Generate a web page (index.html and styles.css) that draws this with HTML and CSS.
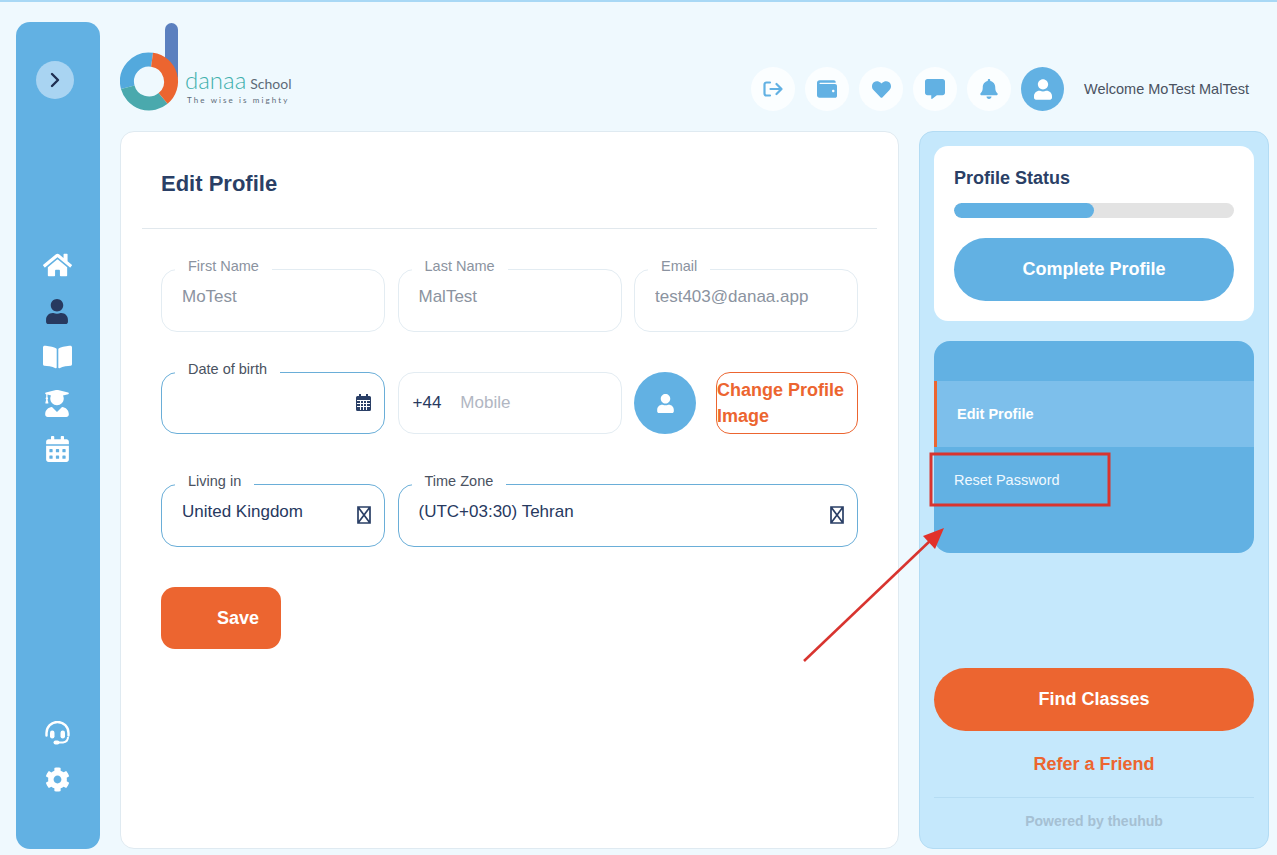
FILE: index.html
```html
<!DOCTYPE html>
<html lang="en">
<head>
    <meta charset="UTF-8">
    <meta name="viewport" content="width=device-width, initial-scale=1.0">
    <title>Edit Profile - danaa School</title>
    <link rel="stylesheet" href="styles.css">
</head>
<body>
    <div class="shell">
        <!-- left rail -->
        <aside class="sidebar">
            <button class="toggle" aria-label="Expand menu">
                <svg width="10" height="16" viewBox="0 0 10 16"><path d="M2 2l6 6-6 6" fill="none" stroke="#1f2f52" stroke-width="2.4" stroke-linecap="round" stroke-linejoin="round"/></svg>
            </button>
            <nav class="rail-nav">
                <a class="rail-item"><svg width="29" height="26" viewBox="0 0 576 512"><path fill="#fff" d="M280.37 148.26L96 300.11V464a16 16 0 0 0 16 16l112.06-.29a16 16 0 0 0 15.92-16V368a16 16 0 0 1 16-16h64a16 16 0 0 1 16 16v95.64a16 16 0 0 0 16 16.05L464 480a16 16 0 0 0 16-16V300L295.67 148.26a12.19 12.19 0 0 0-15.3 0zM571.6 251.47L488 182.56V44.05a12 12 0 0 0-12-12h-56a12 12 0 0 0-12 12v72.61L318.47 43a48 48 0 0 0-61 0L4.34 251.47a12 12 0 0 0-1.6 16.9l25.5 31A12 12 0 0 0 45.15 301l235.22-193.74a12.19 12.19 0 0 1 15.3 0L530.9 301a12 12 0 0 0 16.9-1.6l25.5-31a12 12 0 0 0-1.7-16.93z"/></svg></a>
                <a class="rail-item"><svg width="22" height="25" viewBox="0 0 448 512"><path fill="#27395f" d="M224 256c70.7 0 128-57.3 128-128S294.7 0 224 0 96 57.3 96 128s57.3 128 128 128zm89.6 32h-16.7c-22.2 10.2-46.9 16-72.9 16s-50.6-5.8-72.9-16h-16.7C60.2 288 0 348.2 0 422.4V464c0 26.5 21.5 48 48 48h352c26.5 0 48-21.5 48-48v-41.6c0-74.2-60.2-134.4-134.4-134.4z"/></svg></a>
                <a class="rail-item"><svg width="29" height="26" viewBox="0 0 576 512"><path fill="#fff" d="M542.22 32.05c-54.8 3.11-163.72 14.43-230.96 55.59-4.64 2.84-7.27 7.89-7.27 13.17v363.87c0 11.55 12.63 18.85 23.28 13.49 69.18-34.82 169.23-44.32 218.7-46.92 16.89-.89 30.02-14.43 30.02-30.66V62.75c.01-17.71-15.35-31.74-33.77-30.7zM264.73 87.64C197.5 46.48 88.58 35.17 33.78 32.05 15.36 31.01 0 45.04 0 62.75V400.6c0 16.24 13.13 29.78 30.02 30.66 49.49 2.6 149.59 12.11 218.77 46.95 10.62 5.35 23.21-1.94 23.21-13.46V100.63c0-5.29-2.62-10.14-7.27-12.99z"/></svg></a>
                <a class="rail-item"><svg width="24" height="27" viewBox="0 0 448 512"><path fill="#fff" d="M319.4 320.6L224 416l-95.4-95.4C57.1 323.7 0 382.2 0 454.4v9.6c0 26.5 21.5 48 48 48h352c26.5 0 48-21.5 48-48v-9.6c0-72.2-57.1-130.7-128.6-133.8zM13.6 79.8l6.4 1.5v58.4c-7 4.2-12 11.5-12 20.3 0 8.4 4.6 15.4 11.1 19.7L3.5 242c-1.7 6.9 2.1 14 7.6 14h41.8c5.5 0 9.3-7.1 7.6-14l-15.6-62.3C51.4 175.4 56 168.4 56 160c0-8.8-5-16.1-12-20.3V87.1l66 15.9c-8.6 17.2-14 36.4-14 57 0 70.7 57.3 128 128 128s128-57.3 128-128c0-20.6-5.3-39.8-14-57l96.3-23.2c18.2-4.4 18.2-27.1 0-31.5l-190.4-46c-13-3.1-26.7-3.1-39.7 0L13.6 48.2c-18.1 4.4-18.1 27.2 0 31.6z"/></svg></a>
                <a class="rail-item"><svg width="23" height="26" viewBox="0 0 448 512"><path fill="#fff" d="M0 464c0 26.5 21.5 48 48 48h352c26.5 0 48-21.5 48-48V192H0v272zm320-196c0-6.6 5.4-12 12-12h40c6.6 0 12 5.4 12 12v40c0 6.6-5.4 12-12 12h-40c-6.6 0-12-5.4-12-12v-40zm0 128c0-6.6 5.4-12 12-12h40c6.6 0 12 5.4 12 12v40c0 6.6-5.4 12-12 12h-40c-6.6 0-12-5.4-12-12v-40zM192 268c0-6.6 5.4-12 12-12h40c6.6 0 12 5.4 12 12v40c0 6.6-5.4 12-12 12h-40c-6.6 0-12-5.4-12-12v-40zm0 128c0-6.6 5.4-12 12-12h40c6.6 0 12 5.4 12 12v40c0 6.6-5.4 12-12 12h-40c-6.6 0-12-5.4-12-12v-40zM64 268c0-6.6 5.4-12 12-12h40c6.6 0 12 5.4 12 12v40c0 6.6-5.4 12-12 12H76c-6.6 0-12-5.4-12-12v-40zm0 128c0-6.6 5.4-12 12-12h40c6.6 0 12 5.4 12 12v40c0 6.6-5.4 12-12 12H76c-6.6 0-12-5.4-12-12v-40zM400 64h-48V16c0-8.8-7.2-16-16-16h-32c-8.8 0-16 7.2-16 16v48H160V16c0-8.8-7.2-16-16-16h-32c-8.8 0-16 7.2-16 16v48H48C21.5 64 0 85.5 0 112v48h448v-48c0-26.5-21.5-48-48-48z"/></svg></a>
            </nav>
            <div class="rail-tools">
                <a class="rail-item">
                    <svg width="27" height="25" viewBox="0 0 27 25">
                        <path d="M2.5 14.5V12a11 11 0 0 1 22 0v2.5" fill="none" stroke="#fff" stroke-width="2.4" stroke-linecap="round"/>
                        <rect x="6" y="9.5" width="4.5" height="8" rx="2.2" fill="#fff"/>
                        <rect x="16.5" y="9.5" width="4.5" height="8" rx="2.2" fill="#fff"/>
                        <path d="M24 16c0 3-2 5-5 5.5h-5" fill="none" stroke="#fff" stroke-width="2"/>
                        <rect x="9.5" y="19.5" width="6" height="4" rx="2" fill="#fff"/>
                    </svg>
                </a>
                <a class="rail-item"><svg width="25" height="25" viewBox="0 0 512 512"><path fill="#fff" d="M487.4 315.7l-42.6-24.6c4.3-23.2 4.3-47 0-70.2l42.6-24.6c4.9-2.8 7.1-8.6 5.5-14-11.1-35.6-30-67.8-54.7-94.6-3.8-4.1-10-5.1-14.8-2.3L380.8 110c-17.9-15.4-38.5-27.3-60.8-35.1V25.8c0-5.6-3.9-10.5-9.4-11.7-36.7-8.2-74.3-7.8-109.2 0-5.5 1.2-9.4 6.1-9.4 11.7V75c-22.2 7.9-42.8 19.8-60.8 35.1L88.7 85.5c-4.9-2.8-11-1.9-14.8 2.3-24.7 26.7-43.6 58.9-54.7 94.6-1.7 5.4.6 11.2 5.5 14L67.3 221c-4.3 23.2-4.3 47 0 70.2l-42.6 24.6c-4.9 2.8-7.1 8.6-5.5 14 11.1 35.6 30 67.8 54.7 94.6 3.8 4.1 10 5.1 14.8 2.3l42.6-24.6c17.9 15.4 38.5 27.3 60.8 35.1v49.2c0 5.6 3.9 10.5 9.4 11.7 36.7 8.2 74.3 7.8 109.2 0 5.5-1.2 9.4-6.1 9.4-11.7v-49.2c22.2-7.9 42.8-19.8 60.8-35.1l42.6 24.6c4.9 2.8 11 1.9 14.8-2.3 24.7-26.7 43.6-58.9 54.7-94.6 1.5-5.5-.7-11.3-5.6-14.1zM256 336c-44.1 0-80-35.9-80-80s35.9-80 80-80 80 35.9 80 80-35.9 80-80 80z"/></svg></a>
            </div>
        </aside>

        <div class="content">
            <!-- top bar -->
            <header class="topbar">
                <div class="logo">
                    <svg width="60" height="90" viewBox="0 0 60 90">
                        <rect x="45" y="1" width="13" height="60" rx="6.5" fill="#5b80bf"/>
                        <g fill="none" stroke-width="14">
                            <path d="M7.75 65.2A22 22 0 0 1 32.06 37.7" stroke="#53a9dd"/>
                            <path d="M43.1 76.4A22 22 0 0 1 7.75 65.2" stroke="#4aa9ad"/>
                            <path d="M32.06 37.7A22 22 0 0 1 43.1 76.4" stroke="#ec6530"/>
                        </g>
                    </svg>
                    <div class="logo-text">
                        <div class="logo-name"><span class="logo-danaa">danaa</span> <span class="logo-school">School</span></div>
                        <div class="logo-tag">The wise is mighty</div>
                    </div>
                </div>
                <div class="actions">
                    <a class="circle-btn"><svg width="20" height="16" viewBox="0 0 20 16"><path d="M7 1.5H3.5a2 2 0 0 0-2 2v9a2 2 0 0 0 2 2H7M7.5 8h11M13.5 3l5 5-5 5" fill="none" stroke="#62b1e3" stroke-width="2.2" stroke-linecap="round" stroke-linejoin="round"/></svg></a>
                    <a class="circle-btn"><svg width="20" height="20" viewBox="0 0 512 512"><path fill="#62b1e3" d="M461.2 128H80c-8.84 0-16-7.16-16-16s7.16-16 16-16h384c8.84 0 16-7.16 16-16 0-26.51-21.49-48-48-48H64C28.65 32 0 60.65 0 96v320c0 35.35 28.65 64 64 64h397.2c28.02 0 50.8-21.53 50.8-48V176c0-26.47-22.78-48-50.8-48zM416 336c-17.67 0-32-14.33-32-32s14.33-32 32-32 32 14.33 32 32-14.33 32-32 32z"/></svg></a>
                    <a class="circle-btn"><svg width="19" height="19" viewBox="0 0 512 512"><path fill="#62b1e3" d="M462.3 62.6C407.5 15.9 326 24.3 275.7 76.2L256 96.5l-19.7-20.3C186.1 24.3 104.5 15.9 49.7 62.6c-62.8 53.6-66.1 149.8-9.9 207.9l193.5 199.8c12.5 12.9 32.8 12.9 45.3 0l193.5-199.8c56.3-58.1 53-154.3-9.8-207.9z"/></svg></a>
                    <a class="circle-btn"><svg width="20" height="20" viewBox="0 0 512 512"><path fill="#62b1e3" d="M448 0H64C28.7 0 0 28.7 0 64v288c0 35.3 28.7 64 64 64h96v84c0 9.8 11.2 15.5 19.1 9.7L304 416h144c35.3 0 64-28.7 64-64V64c0-35.3-28.7-64-64-64z"/></svg></a>
                    <a class="circle-btn"><svg width="18" height="20" viewBox="0 0 448 512"><path fill="#62b1e3" d="M224 512c35.32 0 63.97-28.65 63.97-64H160.03c0 35.35 28.65 64 63.97 64zm215.39-149.71c-19.32-20.76-55.47-51.99-55.47-154.29 0-77.7-54.48-139.9-127.94-155.16V32c0-17.67-14.32-32-31.98-32s-31.98 14.33-31.98 32v20.84C118.56 68.1 64.08 130.3 64.08 208c0 102.3-36.15 133.53-55.47 154.29-6 6.45-8.66 14.16-8.61 21.71.11 16.4 12.98 32 32.1 32h383.8c19.12 0 32-15.6 32.1-32 .05-7.55-2.61-15.27-8.61-21.71z"/></svg></a>
                    <a class="avatar"><svg width="18" height="21" viewBox="0 0 448 512"><path fill="#fff" d="M224 256c70.7 0 128-57.3 128-128S294.7 0 224 0 96 57.3 96 128s57.3 128 128 128zm89.6 32h-16.7c-22.2 10.2-46.9 16-72.9 16s-50.6-5.8-72.9-16h-16.7C60.2 288 0 348.2 0 422.4V464c0 26.5 21.5 48 48 48h352c26.5 0 48-21.5 48-48v-41.6c0-74.2-60.2-134.4-134.4-134.4z"/></svg></a>
                    <span class="welcome">Welcome MoTest MalTest</span>
                </div>
            </header>

            <div class="columns">
                <!-- form card -->
                <main class="card">
                    <h1 class="card-title">Edit Profile</h1>
                    <form class="form">
                        <fieldset class="field">
                            <legend>First Name</legend>
                            <input type="text" value="MoTest" disabled>
                        </fieldset>
                        <fieldset class="field">
                            <legend>Last Name</legend>
                            <input type="text" value="MalTest" disabled>
                        </fieldset>
                        <fieldset class="field">
                            <legend>Email</legend>
                            <input type="text" value="test403@danaa.app" disabled>
                        </fieldset>

                        <fieldset class="field active row-two">
                            <legend>Date of birth</legend>
                            <input type="text" class="mid">
                            <svg class="date-icon" width="15" height="17" viewBox="0 0 15 17">
                                <path fill="#2a3f66" d="M3 0h2v2h5V0h2v2h1.5A1.5 1.5 0 0 1 15 3.5v12a1.5 1.5 0 0 1-1.5 1.5h-12A1.5 1.5 0 0 1 0 15.500v-12A1.500 1.500 0 0 1 1.500 2H3z"/>
                                <path fill="none" stroke="#fff" d="M1 6.500h13M1 9.500h13M1 12.500h13M4.500 6v10M7.500 6v10M10.500 6v10"/>
                            </svg>
                        </fieldset>
                        <fieldset class="field row-two">
                            <legend class="no-label"></legend>
                            <div class="phone">
                                <span class="dial">+44</span>
                                <input type="text" class="mid" placeholder="Mobile">
                            </div>
                        </fieldset>
                        <div class="photo row-two">
                            <div class="photo-circle"><svg width="17" height="19" viewBox="0 0 448 512"><path fill="#fff" d="M224 256c70.7 0 128-57.3 128-128S294.7 0 224 0 96 57.3 96 128s57.3 128 128 128zm89.6 32h-16.7c-22.2 10.2-46.9 16-72.9 16s-50.6-5.8-72.9-16h-16.7C60.2 288 0 348.2 0 422.4V464c0 26.5 21.5 48 48 48h352c26.5 0 48-21.5 48-48v-41.6c0-74.2-60.2-134.4-134.4-134.4z"/></svg></div>
                            <button type="button" class="photo-btn">Change Profile Image</button>
                        </div>

                        <fieldset class="field active row-three">
                            <legend>Living in</legend>
                            <input type="text" value="United Kingdom">
                            <svg class="missing-glyph" width="14" height="18" viewBox="0 0 14 18"><path d="M1 1h12v16H1zM1 1l12 16M13 1L1 17" fill="none" stroke="#2a3f66" stroke-width="1.700"/></svg>
                        </fieldset>
                        <fieldset class="field active row-three span-two">
                            <legend>Time Zone</legend>
                            <input type="text" value="(UTC+03:30) Tehran">
                            <svg class="missing-glyph" width="14" height="18" viewBox="0 0 14 18"><path d="M1 1h12v16H1zM1 1l12 16M13 1L1 17" fill="none" stroke="#2a3f66" stroke-width="1.700"/></svg>
                        </fieldset>
                    </form>
                    <button type="button" class="save">Save</button>
                </main>

                <!-- right panel -->
                <aside class="panel">
                    <section class="status">
                        <h2 class="status-title">Profile Status</h2>
                        <div class="progress"><div class="progress-fill" style="width: 50%"></div></div>
                        <button class="pill pill-blue">Complete Profile</button>
                    </section>
                    <nav class="side-menu">
                        <a class="side-link current">Edit Profile</a>
                        <a class="side-link">Reset Password</a>
                    </nav>
                    <div class="panel-foot">
                        <button class="pill pill-orange">Find Classes</button>
                        <a class="refer">Refer a Friend</a>
                        <div class="powered">Powered by theuhub</div>
                    </div>
                </aside>
            </div>
        </div>
    </div>

    <!-- red markup drawn over the screenshot -->
    <svg class="markup" width="1277" height="855" viewBox="0 0 1277 855">
        <rect x="931" y="454" width="178" height="51" fill="none" stroke="#d8342f" stroke-width="3"/>
        <path d="M804 661L932 539" stroke="#d8342f" stroke-width="2.500" fill="none"/>
        <path d="M944 528L935 549L923 536z" fill="#e2312a"/>
    </svg>
</body>
</html>
```

FILE: styles.css
```css
* {
    box-sizing: border-box;
}

body {
    margin: 0;
    height: 855px;
    overflow: hidden;
    background-color: #eff9fe;
    border-top: 2px solid #a8d8f5;
    font-family: "Liberation Sans", Arial, sans-serif;
    color: #27395f;
}

a {
    color: inherit;
    text-decoration: none;
}

button {
    font-family: inherit;
    border: none;
    cursor: pointer;
}

.shell {
    display: flex;
    gap: 20px;
    height: 853px;
    padding: 20px 8px 6px 16px;
}

/* left rail */
.sidebar {
    width: 84px;
    flex-shrink: 0;
    display: flex;
    flex-direction: column;
    align-items: center;
    background-color: #62b1e3;
    border-radius: 14px;
    padding-top: 39px;
    padding-bottom: 47px;
}

.toggle {
    width: 38px;
    height: 38px;
    margin-right: 6px;
    border-radius: 50%;
    background-color: #a9d4f2;
    display: flex;
    align-items: center;
    justify-content: center;
    padding: 0;
}

.rail-nav {
    margin-top: 143px;
    display: flex;
    flex-direction: column;
}

.rail-tools {
    margin-top: auto;
    display: flex;
    flex-direction: column;
}

.rail-item {
    height: 46px;
    display: flex;
    align-items: center;
    justify-content: center;
    margin-right: 2px;
}

/* top bar */
.content {
    flex: 1;
    min-width: 0;
    display: flex;
    flex-direction: column;
}

.topbar {
    height: 109px;
    display: flex;
    justify-content: space-between;
    padding-right: 20px;
}

.logo {
    display: flex;
    gap: 5px;
    height: 90px;
}

.logo-text {
    align-self: flex-end;
    padding-bottom: 7px;
    width: 112px;
}

.logo-name {
    display: flex;
    align-items: baseline;
    gap: 4px;
    line-height: 20px;
}

.logo-danaa {
    font-family: Lato, sans-serif;
    font-weight: 300;
    font-size: 24px;
    color: #3fb0ad;
}

.logo-school {
    font-family: Lato, sans-serif;
    font-size: 14px;
    color: #5d6b78;
}

.logo-tag {
    font-family: Lato, sans-serif;
    font-size: 8px;
    letter-spacing: 2.1px;
    line-height: 10px;
    margin-top: 1px;
    margin-left: 2px;
    color: #5d6b78;
    white-space: nowrap;
}

.actions {
    display: flex;
    align-items: center;
    gap: 10px;
    height: 44px;
    margin-top: 45px;
}

.circle-btn {
    width: 44px;
    height: 44px;
    border-radius: 50%;
    background-color: #fbfeff;
    display: flex;
    align-items: center;
    justify-content: center;
}

.avatar {
    width: 43px;
    height: 44px;
    border-radius: 50%;
    background-color: #62b1e3;
    display: flex;
    align-items: center;
    justify-content: center;
}

.welcome {
    margin-left: 10px;
    font-size: 14.5px;
    color: #4a5261;
}

.columns {
    flex: 1;
    min-height: 0;
    display: grid;
    grid-template-columns: 779px 350px;
    gap: 20px;
}

/* form card */
.card {
    background-color: #fff;
    border: 1px solid #dfeaf1;
    border-radius: 14px;
    padding: 0 21px;
}

.card-title {
    margin: 0;
    padding: 39px 19px 31px;
    font-size: 22px;
    line-height: 26px;
    color: #2a3f66;
    border-bottom: 1px solid #e1e8ed;
}

.form {
    margin-top: 29px;
    padding: 0 19px;
    display: grid;
    grid-template-columns: repeat(3, 1fr);
    column-gap: 12.5px;
    align-items: end;
}

.field {
    position: relative;
    min-width: 0;
    margin: 0;
    padding: 0;
    height: 74px;
    border: 1px solid #e3ecf2;
    border-radius: 16px;
    background-color: #fff;
    display: flex;
}

.field.active {
    border-color: #6aaed8;
}

.field legend {
    margin-left: 13px;
    padding: 0 13px 6px;
    font-size: 14.5px;
    line-height: 16px;
    color: #8b93a0;
}

.field.active legend {
    color: #4a5261;
}

.field legend.no-label {
    padding: 0;
    height: 22px;
    width: 0;
}

.field input {
    flex: 1;
    width: 100%;
    min-width: 0;
    height: 34px;
    border: none;
    outline: none;
    background: transparent;
    padding: 0 0 0 20px;
    font-family: inherit;
    font-size: 17px;
    color: #27395f;
}

.field input:disabled {
    color: #8b93a0;
}

.field input.mid {
    height: 40px;
    font-size: 17px;
}

.field input::placeholder {
    color: #b1b6c2;
}

.row-two {
    margin-top: 29px;
    height: 73px;
}

.row-three {
    margin-top: 39px;
}

.span-two {
    grid-column: span 2;
}

.date-icon {
    flex-shrink: 0;
    margin: 11px 13px 0 0;
}

.missing-glyph {
    flex-shrink: 0;
    margin: 11px 13px 0 0;
}

.phone {
    flex: 1;
    min-width: 0;
    display: flex;
    align-items: center;
    height: 40px;
    padding-left: 14px;
}

.dial {
    font-size: 17px;
    color: #27395f;
}

.phone input {
    padding-left: 19px;
}

.photo {
    display: flex;
    gap: 20px;
    height: 62px;
}

.photo-circle {
    width: 62px;
    height: 62px;
    flex-shrink: 0;
    border-radius: 50%;
    background-color: #62b1e3;
    display: flex;
    align-items: center;
    justify-content: center;
}

.photo-btn {
    flex: 1;
    min-width: 0;
    padding: 0;
    border: 1px solid #ec6530;
    border-radius: 14px;
    background-color: #fff;
    color: #ec6530;
    font-size: 18px;
    font-weight: bold;
    line-height: 26px;
    text-align: left;
}

.save {
    display: block;
    width: 120px;
    height: 62px;
    margin: 40px 0 0 19px;
    padding-left: 40px;
    border-radius: 14px;
    background-color: #ec6530;
    color: #fff;
    font-size: 18px;
    font-weight: bold;
}

/* right panel */
.panel {
    display: flex;
    flex-direction: column;
    background-color: #c5e8fc;
    border: 1px solid #b3dcf4;
    border-radius: 14px;
    padding: 14px 14px 19px;
}

.status {
    height: 175px;
    padding: 20px 20px 0;
    background-color: #fff;
    border-radius: 14px;
}

.status-title {
    margin: 0;
    font-size: 18px;
    line-height: 24px;
    color: #2a3f66;
}

.progress {
    height: 15px;
    margin-top: 13px;
    border-radius: 8px;
    background-color: #e3e3e3;
    overflow: hidden;
}

.progress-fill {
    height: 100%;
    border-radius: 8px;
    background-color: #62b1e3;
}

.pill {
    display: block;
    width: 100%;
    height: 63px;
    border-radius: 32px;
    color: #fff;
    font-size: 18px;
    font-weight: bold;
}

.pill-blue {
    margin-top: 20px;
    background-color: #62b1e3;
}

.pill-orange {
    background-color: #ec6530;
}

.side-menu {
    height: 212px;
    margin-top: 20px;
    padding-top: 40px;
    border-radius: 16px;
    background-color: #62b1e3;
}

.side-link {
    display: flex;
    align-items: center;
    height: 66px;
    padding-left: 20px;
    font-size: 14.5px;
    color: #f0f9ff;
}

.side-link.current {
    background-color: #7dbfeb;
    border-left: 3px solid #ec6530;
    font-weight: bold;
    color: #fff;
}

.panel-foot {
    margin-top: auto;
    display: flex;
    flex-direction: column;
    align-items: center;
}

.refer {
    margin-top: 22px;
    font-size: 18px;
    font-weight: bold;
    line-height: 22px;
    color: #ec6530;
}

.powered {
    width: 100%;
    margin-top: 22px;
    padding-top: 15px;
    border-top: 1px solid #b5dcf3;
    font-size: 14px;
    font-weight: bold;
    line-height: 16px;
    text-align: center;
    color: #a5c0d3;
}

.markup {
    position: absolute;
    top: 0;
    left: 0;
    pointer-events: none;
}
```
